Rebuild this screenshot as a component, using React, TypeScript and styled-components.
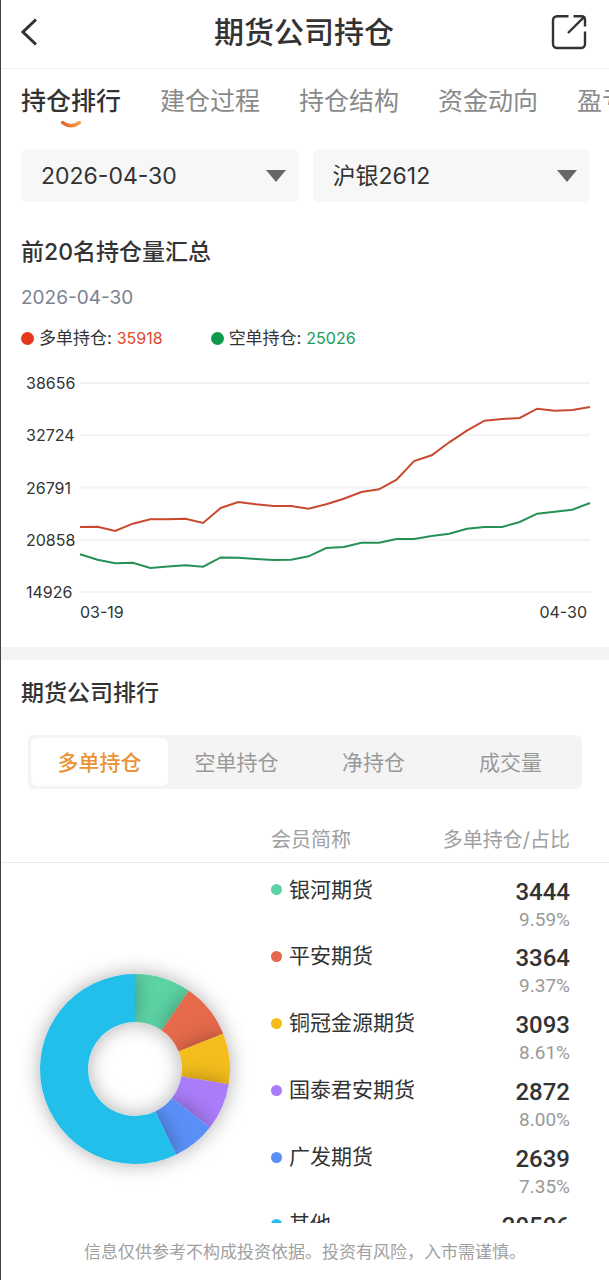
import { useState } from "react";
import styled, { createGlobalStyle } from "styled-components";

const GlobalStyle = createGlobalStyle`
    * {
        box-sizing: border-box;
    }

    body {
        margin: 0;
        background: #ffffff;
        color: #333333;
        font-family: Inter, "Noto Sans CJK SC", sans-serif;
    }

    button, select {
        margin: 0;
        border: none;
        background: none;
        color: inherit;
        font-family: inherit;
        cursor: pointer;
    }
`;

const Page = styled.div`
    display: flex;
    flex-direction: column;
    height: 100vh;
    border-left: 1px solid #444444;
    overflow: hidden;
`;

const Header = styled.header`
    display: flex;
    flex-shrink: 0;
    align-items: center;
    justify-content: space-between;
    height: 69px;
    padding: 0 22px 5px 20px;
    border-bottom: 1px solid #efefef;
`;

const IconButton = styled.button`
    display: flex;
    width: 36px;
    padding: 0;
`;

const Title = styled.h1`
    margin: 0;
    font-size: 30px;
    line-height: 40px;
    font-weight: 500;
`;

const Content = styled.main`
    flex: 1;
    min-height: 0;
    overflow-y: auto;
    scrollbar-width: none;
`;

const Tabs = styled.nav`
    display: flex;
    gap: 39px;
    height: 80px;
    padding: 14px 0 0 20px;
    overflow: hidden;
`;

const Tab = styled.button<{ $active: boolean }>`
    display: flex;
    flex-direction: column;
    flex-shrink: 0;
    align-items: center;
    gap: 2px;
    padding: 0;
    font-size: 25px;
    line-height: 36px;
    font-weight: ${({ $active }) => ($active ? 500 : 400)};
    color: ${({ $active }) => ($active ? "#333333" : "#8a8a8a")};
`;

const Filters = styled.div`
    display: grid;
    grid-template-columns: 1fr 1fr;
    gap: 14px;
    padding: 0 19px 0 20px;
`;

const SelectBox = styled.label`
    display: grid;
    align-items: center;
    background: #f7f7f7;
    border-radius: 6px;

    & > * {
        grid-area: 1 / 1;
    }

    svg {
        justify-self: end;
        margin-right: 13px;
        pointer-events: none;
    }
`;

const Select = styled.select`
    width: 100%;
    height: 53px;
    padding: 0 40px 0 20px;
    appearance: none;
    font-size: 23px;
`;

const Summary = styled.section`
    padding: 34px 19px 25px 20px;
`;

const SectionTitle = styled.h2`
    margin: 0;
    font-size: 23px;
    line-height: 32px;
    font-weight: 500;
`;

const DateText = styled.p`
    margin: 16px 0 14px;
    font-size: 19px;
    line-height: 28px;
    color: #7b8290;
`;

const Legend = styled.div`
    display: flex;
    gap: 48px;
    font-size: 17px;
    line-height: 24px;
`;

const LegendItem = styled.span`
    display: flex;
    align-items: center;
    gap: 5px;
`;

const LegendValue = styled.span<{ $color: string }>`
    font-size: 16px;
    color: ${({ $color }) => $color};
`;

const Dot = styled.i<{ $size: number; $color: string }>`
    flex-shrink: 0;
    width: ${({ $size }) => $size}px;
    height: ${({ $size }) => $size}px;
    border-radius: 50%;
    background: ${({ $color }) => $color};
`;

const ChartGrid = styled.div`
    display: grid;
    grid-template-columns: 54px 1fr;
    margin-top: 23px;
    padding-left: 5px;
    font-size: 16px;
    line-height: 20px;
`;

const YAxis = styled.div`
    display: flex;
    flex-direction: column;
    justify-content: space-between;
    height: 229px;
`;

const Plot = styled.svg`
    width: 100%;
    height: 209px;
    margin-top: 10px;
    overflow: visible;
`;

const XAxis = styled.div`
    display: flex;
    grid-column: 2;
    justify-content: space-between;
    padding-right: 3px;
`;

const Divider = styled.div`
    height: 13px;
    background: #f4f4f4;
`;

const Ranking = styled.section`
    padding-top: 17px;

    ${SectionTitle} {
        padding-left: 20px;
    }
`;

const Segments = styled.div`
    display: grid;
    grid-template-columns: repeat(4, 1fr);
    height: 54px;
    margin: 26px 27px 0;
    padding: 3px;
    border-radius: 6px;
    background: #f4f4f4;
`;

const Segment = styled.button<{ $active: boolean }>`
    padding: 0 0 2px;
    border-radius: 6px;
    background: ${({ $active }) => ($active ? "#ffffff" : "transparent")};
    font-size: 21px;
    font-weight: ${({ $active }) => ($active ? 500 : 400)};
    color: ${({ $active }) => ($active ? "#ea9336" : "#999999")};
`;

const Table = styled.table`
    width: 100%;
    margin-top: 26px;
    border-collapse: collapse;
`;

const HeadCell = styled.th<{ $align?: string }>`
    height: 47px;
    padding: ${({ $align }) => ($align === "right" ? "0 39px 0 0" : "0")};
    border-bottom: 1px solid #ebebeb;
    text-align: ${({ $align }) => $align || "left"};
    font-size: 20px;
    font-weight: 400;
    color: #a0a0a0;
`;

const DonutCell = styled.td`
    width: 270px;
    padding: 12px 0 0 9px;
    vertical-align: middle;

    svg {
        display: block;
    }
`;

const Cell = styled.td`
    height: 67px;
    padding: 0;
    vertical-align: top;
`;

const Member = styled.div`
    display: flex;
    align-items: center;
    gap: 7px;
    padding-top: 12px;
    font-size: 21px;
    line-height: 30px;
`;

const Amount = styled.div`
    padding: 17px 39px 7px 0;
    text-align: right;
    font-family: Roboto, sans-serif;
    font-size: 24px;
    line-height: 24px;
    font-weight: 500;
`;

const Percent = styled.div`
    padding-right: 39px;
    text-align: right;
    font-family: Roboto, sans-serif;
    font-size: 19px;
    line-height: 18px;
    color: #999999;
`;

const Footer = styled.footer`
    flex-shrink: 0;
    height: 57px;
    padding-top: 16px;
    text-align: center;
    font-size: 17px;
    line-height: 26px;
    color: #a0a0a0;
    white-space: nowrap;
`;

const tabs = ["持仓排行", "建仓过程", "持仓结构", "资金动向", "盈亏分析"];
const segments = ["多单持仓", "空单持仓", "净持仓", "成交量"];
const yLabels = [38656, 32724, 26791, 20858, 14926];

const longData = [
    22305, 22343, 21851, 22684, 23176, 23176, 23251, 22759, 24462, 25144,
    24879, 24690, 24690, 24387, 24879, 25522, 26279, 26582, 27680, 29799,
    30443, 31919, 33244, 34379, 34568, 34682, 35742, 35515, 35590, 35918,
];

const shortData = [
    19201, 18595, 18179, 18255, 17649, 17838, 17952, 17800, 18860, 18822,
    18671, 18557, 18595, 18974, 19920, 20034, 20526, 20526, 20942, 20942,
    21283, 21548, 22116, 22305, 22305, 22873, 23819, 24046, 24273, 25026,
];

const members = [
    { name: "银河期货", value: 3444, percent: "9.59%", color: "#5bd3a4" },
    { name: "平安期货", value: 3364, percent: "9.37%", color: "#e56a4b" },
    { name: "铜冠金源期货", value: 3093, percent: "8.61%", color: "#f4bd1b" },
    { name: "国泰君安期货", value: 2872, percent: "8.00%", color: "#aa7bfa" },
    { name: "广发期货", value: 2639, percent: "7.35%", color: "#5a8ff7" },
    { name: "其他", value: 20506, percent: "57.09%", color: "#24bfeb" },
];

const PLOT_WIDTH = 510;
const PLOT_HEIGHT = 209;

function toPoints(data: number[]) {
    const max = yLabels[0];
    const range = max - yLabels[yLabels.length - 1];
    return data
        .map((value, index) => {
            const x = (index / (data.length - 1)) * PLOT_WIDTH;
            const y = ((max - value) / range) * PLOT_HEIGHT;
            return `${x.toFixed(1)},${y.toFixed(1)}`;
        })
        .join(" ");
}

function LineChart() {
    return (
        <ChartGrid>
            <YAxis>
                {yLabels.map(label => (
                    <span key={label}>{label}</span>
                ))}
            </YAxis>
            <Plot viewBox={`0 0 ${PLOT_WIDTH} ${PLOT_HEIGHT}`} preserveAspectRatio="none">
                {yLabels.map((label, index) => (
                    <path
                        key={label}
                        d={`M0 ${(index * PLOT_HEIGHT) / 4}H${PLOT_WIDTH}`}
                        stroke="#f3f3f3"
                        strokeWidth="2"
                    />
                ))}
                <polyline points={toPoints(longData)} fill="none" stroke="#c9492f" strokeWidth="2" />
                <polyline points={toPoints(shortData)} fill="none" stroke="#279055" strokeWidth="2" />
            </Plot>
            <XAxis>
                <span>03-19</span>
                <span>04-30</span>
            </XAxis>
        </ChartGrid>
    );
}

function Donut() {
    const total = members.reduce((sum, member) => sum + member.value, 0);
    const point = (ratio: number, radius: number) => {
        const angle = ratio * Math.PI * 2;
        return `${(125 + Math.sin(angle) * radius).toFixed(2)} ${(125 - Math.cos(angle) * radius).toFixed(2)}`;
    };
    let offset = 0;

    return (
        <svg width="250" height="250" viewBox="0 0 250 250">
            <defs>
                <filter id="shade" filterUnits="userSpaceOnUse" x="0" y="0" width="250" height="250">
                    <feDropShadow dx="0" dy="0" stdDeviation="10" floodColor="#00141e" floodOpacity="0.32" />
                </filter>
            </defs>
            {members.map(member => {
                const start = offset / total;
                offset += member.value;
                const end = offset / total;
                const large = end - start > 0.5 ? 1 : 0;
                return (
                    <path
                        key={member.name}
                        d={`M${point(start, 95)}A95 95 0 ${large} 1 ${point(end, 95)}L${point(end, 47)}A47 47 0 ${large} 0 ${point(start, 47)}Z`}
                        fill={member.color}
                        filter="url(#shade)"
                    />
                );
            })}
        </svg>
    );
}

function Arrow() {
    return (
        <svg width="20" height="12" viewBox="0 0 20 12">
            <path d="M0 0H20L10 12Z" fill="#666666" />
        </svg>
    );
}

function App() {
    const [tab, setTab] = useState(tabs[0]);
    const [segment, setSegment] = useState(segments[0]);

    return (
        <Page>
            <GlobalStyle />
            <Header>
                <IconButton aria-label="返回">
                    <svg width="18" height="28" viewBox="0 0 18 28" fill="none" stroke="#333333" strokeWidth="3">
                        <path d="M15 1.5L2 14L15 26.5" />
                    </svg>
                </IconButton>
                <Title>期货公司持仓</Title>
                <IconButton aria-label="分享">
                    <svg width="36" height="36" viewBox="0 0 36 36" fill="none" stroke="#333333" strokeWidth="2.4">
                        <path d="M17.5 2.2H6A4 4 0 0 0 2 6.2V30A4 4 0 0 0 6 34H30A4 4 0 0 0 34 30V17.5" />
                        <path d="M22.5 2.2H30.5Q34 2.2 34 5.7V12.5M33 3.2L17 19" />
                    </svg>
                </IconButton>
            </Header>

            <Content>
                <Tabs>
                    {tabs.map(name => (
                        <Tab key={name} $active={name === tab} onClick={() => setTab(name)}>
                            {name}
                            {name === tab && (
                                <svg width="20" height="8" viewBox="0 0 20 8" fill="none">
                                    <defs>
                                        <linearGradient id="smile">
                                            <stop offset="0" stopColor="#e8622b" />
                                            <stop offset="1" stopColor="#f2a044" />
                                        </linearGradient>
                                    </defs>
                                    <path d="M1.7 1.6Q10 8 18.3 1.6" stroke="url(#smile)" strokeWidth="3.4" strokeLinecap="round" />
                                </svg>
                            )}
                        </Tab>
                    ))}
                </Tabs>

                <Filters>
                    <SelectBox>
                        <Select aria-label="日期">
                            <option>2026-04-30</option>
                        </Select>
                        <Arrow />
                    </SelectBox>
                    <SelectBox>
                        <Select aria-label="合约">
                            <option>沪银2612</option>
                        </Select>
                        <Arrow />
                    </SelectBox>
                </Filters>

                <Summary>
                    <SectionTitle>前20名持仓量汇总</SectionTitle>
                    <DateText>2026-04-30</DateText>
                    <Legend>
                        <LegendItem>
                            <Dot $size={13} $color="#e5371b" />
                            <span>多单持仓: <LegendValue $color="#e0492f">35918</LegendValue></span>
                        </LegendItem>
                        <LegendItem>
                            <Dot $size={13} $color="#0b9b4a" />
                            <span>空单持仓: <LegendValue $color="#1f9a55">25026</LegendValue></span>
                        </LegendItem>
                    </Legend>
                    <LineChart />
                </Summary>

                <Divider />

                <Ranking>
                    <SectionTitle>期货公司排行</SectionTitle>
                    <Segments>
                        {segments.map(name => (
                            <Segment key={name} $active={name === segment} onClick={() => setSegment(name)}>
                                {name}
                            </Segment>
                        ))}
                    </Segments>
                    <Table>
                        <thead>
                            <tr>
                                <HeadCell />
                                <HeadCell>会员简称</HeadCell>
                                <HeadCell $align="right">多单持仓/占比</HeadCell>
                            </tr>
                        </thead>
                        <tbody>
                            {members.map((member, index) => (
                                <tr key={member.name}>
                                    {index === 0 && (
                                        <DonutCell rowSpan={members.length}>
                                            <Donut />
                                        </DonutCell>
                                    )}
                                    <Cell>
                                        <Member>
                                            <Dot $size={11} $color={member.color} />
                                            {member.name}
                                        </Member>
                                    </Cell>
                                    <Cell>
                                        <Amount>{member.value}</Amount>
                                        <Percent>{member.percent}</Percent>
                                    </Cell>
                                </tr>
                            ))}
                        </tbody>
                    </Table>
                </Ranking>
            </Content>

            <Footer>信息仅供参考不构成投资依据。投资有风险，入市需谨慎。</Footer>
        </Page>
    );
}

export default App;
